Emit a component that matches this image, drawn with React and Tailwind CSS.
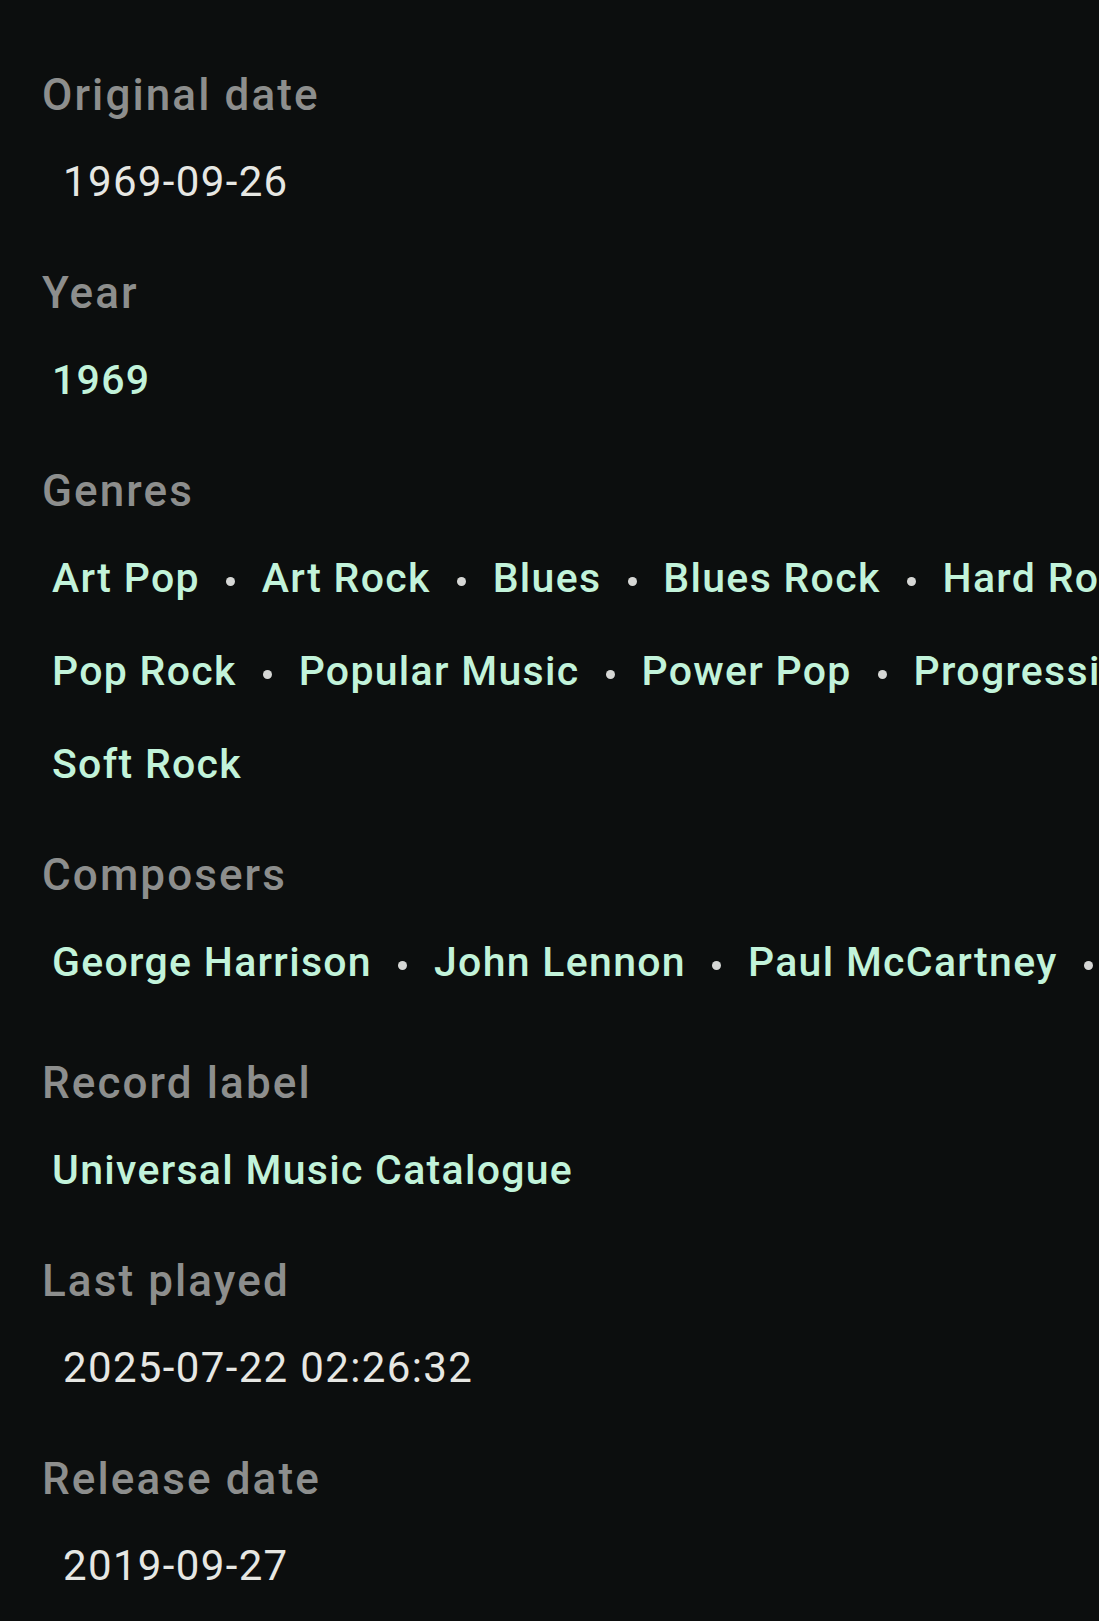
const sections = [
  { label: 'Original date', kind: 'text', rows: [['1969-09-26']] },
  { label: 'Year', kind: 'link', rows: [['1969']] },
  {
    label: 'Genres',
    kind: 'link',
    rows: [
      ['Art Pop', 'Art Rock', 'Blues', 'Blues Rock', 'Hard Rock'],
      ['Pop Rock', 'Popular Music', 'Power Pop', 'Progressive Rock'],
      ['Soft Rock'],
    ],
  },
  {
    label: 'Composers',
    kind: 'link',
    rows: [['George Harrison', 'John Lennon', 'Paul McCartney', 'Ringo Starr']],
    extra: true,
  },
  { label: 'Record label', kind: 'link', rows: [['Universal Music Catalogue']] },
  { label: 'Last played', kind: 'text', rows: [['2025-07-22 02:26:32']] },
  { label: 'Release date', kind: 'text', rows: [['2019-09-27']] },
]

const Dot = () => (
  <div className="flex w-[38px] shrink-0 justify-center">
    <span className="mt-[8px] block size-[9px] rounded-full bg-[#d6d7d5]" />
  </div>
)

const ValueRow = ({ items, kind }) => {
  if (kind === 'text') {
    return (
      <div className="flex h-[93px] items-center pl-[21px]">
        <span className="text-[42px] leading-[52px] tracking-[1.35px] text-[#e6e7e3]">{items[0]}</span>
      </div>
    )
  }
  return (
    <div className="-ml-[2px] flex h-[93px] items-center whitespace-nowrap">
      {items.map((item, i) => (
        <div key={item} className="flex shrink-0 items-center">
          {i > 0 && <Dot />}
          <span className="px-[12px] text-[41px] font-medium leading-[52px] tracking-[1.3px] text-[#c2f3da]">
            {item}
          </span>
        </div>
      ))}
    </div>
  )
}

export default function App() {
  return (
    <div
      className="min-h-[1621px] w-full overflow-hidden bg-[#0c0e0e] pl-[42px] pt-[69px]"
      style={{ fontFamily: 'Roboto, "Noto Sans", sans-serif' }}
    >
      {sections.map((s) => (
        <section key={s.label} className={s.extra ? 'mb-[49px]' : 'mb-[39px]'}>
          <h2 className="text-[44px] font-medium leading-[52px] tracking-[2.1px] text-[#8d8e8d]">{s.label}</h2>
          <div className="mt-[14px]">
            {s.rows.map((row, i) => (
              <ValueRow key={i} items={row} kind={s.kind} />
            ))}
          </div>
        </section>
      ))}
    </div>
  )
}
